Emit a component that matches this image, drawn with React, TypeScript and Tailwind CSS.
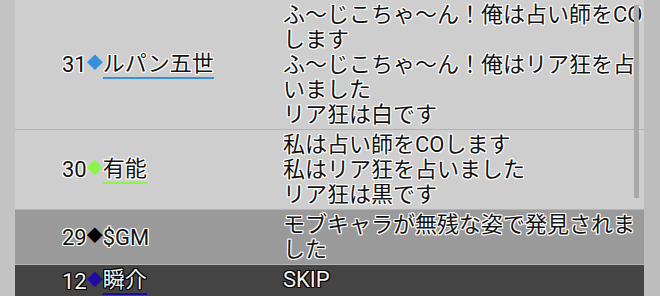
type Row = {
  no: number
  mark: string
  name: string
  line?: string
  text: string
  tone: "light" | "mid" | "dark"
}

const ROWS: Row[] = [
  {
    no: 31,
    mark: "text-[#3a8fdc]",
    name: "ルパン五世",
    line: "border-[#3a8fdc]",
    text: "ふ〜じこちゃ〜ん！俺は占い師をCOします\nふ〜じこちゃ〜ん！俺はリア狂を占いました\nリア狂は白です",
    tone: "light",
  },
  {
    no: 30,
    mark: "text-[#8ef24c]",
    name: "有能",
    line: "border-[#8ef24c]",
    text: "私は占い師をCOします\n私はリア狂を占いました\nリア狂は黒です",
    tone: "light",
  },
  { no: 29, mark: "text-black", name: "$GM", text: "モブキャラが無残な姿で発見されました", tone: "mid" },
  { no: 12, mark: "text-[#1c0ca0]", name: "瞬介", line: "border-[#1c0ca0]", text: "SKIP", tone: "dark" },
]

const TONE: Record<Row["tone"], string> = {
  light:
    "bg-[#cecece] text-[#111] [text-shadow:1px_0_0_#fff,-1px_0_0_#fff,0_1px_0_#fff,0_-1px_0_#fff,1px_1px_0_#fff,-1px_-1px_0_#fff,1px_-1px_0_#fff,-1px_1px_0_#fff]",
  mid: "bg-[#9a9a9a] text-[#111] [text-shadow:1px_0_0_#fff,-1px_0_0_#fff,0_1px_0_#fff,0_-1px_0_#fff,1px_1px_0_#fff,-1px_-1px_0_#fff,1px_-1px_0_#fff,-1px_1px_0_#fff]",
  dark: "bg-[#444444] text-[#f4f4f4] [text-shadow:1px_0_0_#000,-1px_0_0_#000,0_1px_0_#000,0_-1px_0_#000,1px_1px_0_#000,-1px_-1px_0_#000,1px_-1px_0_#000,-1px_1px_0_#000]",
}

export default function App() {
  return (
    <div className="flex h-[296px] w-[660px] overflow-hidden bg-[#bdbdbd] font-['Roboto','Noto_Sans_CJK_JP',sans-serif] text-[22px] leading-[25px]">
      <div className="w-[15px] shrink-0 bg-[#c3c3c3]" />
      <div className="relative w-[629px] shrink-0 bg-[#c8c8c8]">
        {ROWS.map((row) => (
          <div key={row.no} className={`grid grid-cols-[268px_1fr] border-b border-[#b4b4b4] py-[2px] ${TONE[row.tone]}`}>
            <div className="flex items-center pl-[47px]">
              <span>{row.no}</span>
              <span className={`relative -top-[2px] text-[16px] [text-shadow:none] ${row.mark}`}>◆</span>
              {row.line ? (
                <span className={`inline-block border-b-2 leading-[26px] ${row.line}`}>{row.name}</span>
              ) : (
                <span>{row.name}</span>
              )}
            </div>
            <div className="whitespace-pre-line">{row.text}</div>
          </div>
        ))}
        <div className="absolute right-[5px] top-[5px] h-[193px] w-[5px] bg-[#a9a9a9]" />
      </div>
      <div className="flex-1 bg-[#bdbdbd]" />
    </div>
  )
}
